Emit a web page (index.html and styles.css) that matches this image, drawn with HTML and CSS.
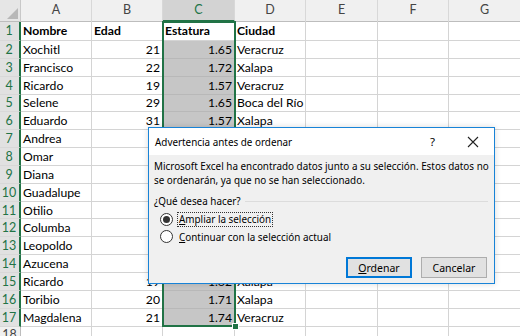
FILE: index.html
```html
<!DOCTYPE html>
<html lang="es">
    <head>
        <meta charset="UTF-8">
        <title>Advertencia antes de ordenar</title>
        <link rel="stylesheet" href="styles.css">
    </head>
    <body>
        <div class="sheet">
            <div class="row head-row">
                <div class="corner"><span class="tri"></span></div>
                <div class="col-head">A</div>
                <div class="col-head">B</div>
                <div class="col-head sel">C</div>
                <div class="col-head">D</div>
                <div class="col-head">E</div>
                <div class="col-head">F</div>
                <div class="col-head">G</div>
            </div>
            <div class="row first">
                <div class="row-head sel">1</div>
                <div class="cell b">Nombre</div>
                <div class="cell b">Edad</div>
                <div class="cell b">Estatura</div>
                <div class="cell b">Ciudad</div>
                <div class="cell"></div>
                <div class="cell"></div>
                <div class="cell"></div>
            </div>
            <div class="row">
                <div class="row-head sel">2</div>
                <div class="cell">Xochitl</div>
                <div class="cell num">21</div>
                <div class="cell num shade">1.65</div>
                <div class="cell">Veracruz</div>
                <div class="cell"></div>
                <div class="cell"></div>
                <div class="cell"></div>
            </div>
            <div class="row">
                <div class="row-head sel">3</div>
                <div class="cell">Francisco</div>
                <div class="cell num">22</div>
                <div class="cell num shade">1.72</div>
                <div class="cell">Xalapa</div>
                <div class="cell"></div>
                <div class="cell"></div>
                <div class="cell"></div>
            </div>
            <div class="row">
                <div class="row-head sel">4</div>
                <div class="cell">Ricardo</div>
                <div class="cell num">19</div>
                <div class="cell num shade">1.57</div>
                <div class="cell">Veracruz</div>
                <div class="cell"></div>
                <div class="cell"></div>
                <div class="cell"></div>
            </div>
            <div class="row">
                <div class="row-head sel">5</div>
                <div class="cell">Selene</div>
                <div class="cell num">29</div>
                <div class="cell num shade">1.65</div>
                <div class="cell">Boca del Río</div>
                <div class="cell"></div>
                <div class="cell"></div>
                <div class="cell"></div>
            </div>
            <div class="row">
                <div class="row-head sel">6</div>
                <div class="cell">Eduardo</div>
                <div class="cell num">31</div>
                <div class="cell num shade">1.57</div>
                <div class="cell">Xalapa</div>
                <div class="cell"></div>
                <div class="cell"></div>
                <div class="cell"></div>
            </div>
            <!-- rows 7-14: B, C and D lie under the dialog -->
            <div class="row">
                <div class="row-head sel">7</div>
                <div class="cell">Andrea</div>
                <div class="cell"></div>
                <div class="cell shade"></div>
                <div class="cell"></div>
                <div class="cell"></div>
                <div class="cell"></div>
                <div class="cell"></div>
            </div>
            <div class="row">
                <div class="row-head sel">8</div>
                <div class="cell">Omar</div>
                <div class="cell"></div>
                <div class="cell shade"></div>
                <div class="cell"></div>
                <div class="cell"></div>
                <div class="cell"></div>
                <div class="cell"></div>
            </div>
            <div class="row">
                <div class="row-head sel">9</div>
                <div class="cell">Diana</div>
                <div class="cell"></div>
                <div class="cell shade"></div>
                <div class="cell"></div>
                <div class="cell"></div>
                <div class="cell"></div>
                <div class="cell"></div>
            </div>
            <div class="row">
                <div class="row-head sel">10</div>
                <div class="cell">Guadalupe</div>
                <div class="cell"></div>
                <div class="cell shade"></div>
                <div class="cell"></div>
                <div class="cell"></div>
                <div class="cell"></div>
                <div class="cell"></div>
            </div>
            <div class="row">
                <div class="row-head sel">11</div>
                <div class="cell">Otilio</div>
                <div class="cell"></div>
                <div class="cell shade"></div>
                <div class="cell"></div>
                <div class="cell"></div>
                <div class="cell"></div>
                <div class="cell"></div>
            </div>
            <div class="row">
                <div class="row-head sel">12</div>
                <div class="cell">Columba</div>
                <div class="cell"></div>
                <div class="cell shade"></div>
                <div class="cell"></div>
                <div class="cell"></div>
                <div class="cell"></div>
                <div class="cell"></div>
            </div>
            <div class="row">
                <div class="row-head sel">13</div>
                <div class="cell">Leopoldo</div>
                <div class="cell"></div>
                <div class="cell shade"></div>
                <div class="cell"></div>
                <div class="cell"></div>
                <div class="cell"></div>
                <div class="cell"></div>
            </div>
            <div class="row">
                <div class="row-head sel">14</div>
                <div class="cell">Azucena</div>
                <div class="cell"></div>
                <div class="cell shade"></div>
                <div class="cell"></div>
                <div class="cell"></div>
                <div class="cell"></div>
                <div class="cell"></div>
            </div>
            <div class="row">
                <div class="row-head sel">15</div>
                <div class="cell">Ricardo</div>
                <div class="cell num">19</div>
                <div class="cell num shade">1.62</div>
                <div class="cell">Xalapa</div>
                <div class="cell"></div>
                <div class="cell"></div>
                <div class="cell"></div>
            </div>
            <div class="row">
                <div class="row-head sel">16</div>
                <div class="cell">Toribio</div>
                <div class="cell num">20</div>
                <div class="cell num shade">1.71</div>
                <div class="cell">Xalapa</div>
                <div class="cell"></div>
                <div class="cell"></div>
                <div class="cell"></div>
            </div>
            <div class="row">
                <div class="row-head sel">17</div>
                <div class="cell">Magdalena</div>
                <div class="cell num">21</div>
                <div class="cell num shade">1.74</div>
                <div class="cell">Veracruz</div>
                <div class="cell"></div>
                <div class="cell"></div>
                <div class="cell"></div>
            </div>
            <div class="row">
                <div class="row-head">18</div>
                <div class="cell"></div>
                <div class="cell"></div>
                <div class="cell"></div>
                <div class="cell"></div>
                <div class="cell"></div>
                <div class="cell"></div>
                <div class="cell"></div>
            </div>

            <!-- selection outline over C1:C17 -->
            <div class="selection"><span class="handle"></span></div>
        </div>

        <div class="dialog">
            <div class="dialog-title">
                <span class="title-text">Advertencia antes de ordenar</span>
                <span class="help">?</span>
                <svg class="close" width="12" height="12" viewBox="0 0 12 12">
                    <path d="M1 1L11 11M11 1L1 11" stroke="#222" stroke-width="1.1" fill="none"/>
                </svg>
            </div>
            <div class="dialog-body">
                <p class="message">Microsoft Excel ha encontrado datos junto a su selección. Estos datos no<br>se ordenarán, ya que no se han seleccionado.</p>
                <div class="group-label">¿Qué desea hacer?</div>
                <div class="option first-opt">
                    <span class="radio checked"></span>
                    <span class="focus"><u>A</u>mpliar la selección</span>
                </div>
                <div class="option">
                    <span class="radio"></span>
                    <span class="label"><u>C</u>ontinuar con la selección actual</span>
                </div>
                <div class="buttons">
                    <button class="btn default"><u>O</u>rdenar</button>
                    <button class="btn">Cancelar</button>
                </div>
            </div>
        </div>
    </body>
</html>
```

FILE: styles.css
```css
* {
    margin: 0;
    padding: 0;
    box-sizing: border-box;
}
body {
    background: #FFF;
    color: #000;
    width: 520px;
    height: 336px;
    overflow: hidden;
}

/* ---------- sheet ---------- */
.sheet {
    position: relative;
    font: 12.2px Lato, "Liberation Sans", sans-serif;
}
.row {
    display: grid;
    grid-template-columns: 21px 71px 71px 72px 71px 72px 71px 72px;
    height: 17.85px;
}
.head-row {
    height: 21px;
}
.first {
    height: 20px;
}
.corner {
    position: relative;
    background: #E6E6E6;
    border-right: 1px solid #C8C8C8;
    border-bottom: 1px solid #BDBDBD;
}
.tri {
    position: absolute;
    right: 2px;
    bottom: 2px;
    width: 0;
    height: 0;
    border-left: 11px solid transparent;
    border-bottom: 11px solid #B8B8B8;
}
.col-head {
    background: #F0F0F0;
    color: #444;
    font-size: 12.5px;
    text-align: center;
    line-height: 20px;
    border-right: 1px solid #D8D8D8;
    border-bottom: 1px solid #BDBDBD;
}
.col-head.sel {
    background: #D3D3D3;
    color: #217346;
    border-bottom: 2px solid #217346;
}
.row-head {
    background: #F0F0F0;
    color: #444;
    font-size: 12.5px;
    border-right: 1px solid #BDBDBD;
    border-bottom: 1px solid #D8D8D8;
    display: flex;
    align-items: center;
    justify-content: center;
    padding-right: 1px;
}
.row-head.sel {
    background: #E1E1E1;
    color: #217346;
    border-right: 2px solid #217346;
}
.cell {
    border-right: 1px solid #D4D4D4;
    border-bottom: 1px solid #D4D4D4;
    padding: 0 2px;
    white-space: nowrap;
    overflow: hidden;
    display: flex;
    align-items: center;
}
.cell.b {
    font-weight: bold;
}
.cell.num {
    justify-content: flex-end;
}
.cell.shade {
    background: #C6C6C6;
    border-right-color: #B8B8B8;
    border-bottom-color: #B8B8B8;
}
.selection {
    position: absolute;
    left: 162px;
    top: 21px;
    width: 74px;
    height: 306px;
    border: 2px solid #217346;
}
.handle {
    position: absolute;
    right: -5px;
    bottom: -5px;
    width: 7px;
    height: 7px;
    background: #217346;
    border: 1px solid #FFF;
}

/* ---------- dialog ---------- */
.dialog {
    position: absolute;
    left: 148px;
    top: 127px;
    width: 347px;
    height: 157px;
    background: #F0F0F0;
    border: 1px solid #1883D7;
    font: 9.9px "Noto Sans", "Open Sans", sans-serif;
    color: #000;
    box-shadow: 0 0 6px rgba(0, 0, 0, 0.15);
}
.dialog-title {
    display: flex;
    align-items: center;
    height: 27px;
    background: #FFF;
    padding: 0 15px 0 6px;
}
.title-text {
    flex: 1;
}
.help {
    font-size: 11.5px;
    margin-right: 32px;
}
.close {
    display: block;
}
.dialog-body {
    padding: 4px 6px 0 5px;
}
.message {
    line-height: 14px;
    white-space: nowrap;
}
.group-label {
    display: flex;
    align-items: center;
    margin-top: 6px;
    height: 16px;
}
.group-label::after {
    content: "";
    flex: 1;
    border-top: 1px solid #DCDCDC;
    margin-left: 4px;
}
.option {
    display: flex;
    align-items: center;
    height: 17px;
    padding-left: 6px;
}
.first-opt {
    margin-top: 2px;
}
.radio {
    width: 13px;
    height: 13px;
    border: 1px solid #333;
    border-radius: 50%;
    background: #FFF;
    margin-right: 4px;
    display: flex;
    align-items: center;
    justify-content: center;
}
.radio.checked::after {
    content: "";
    width: 7px;
    height: 7px;
    border-radius: 50%;
    background: #333;
}
.focus {
    border: 1px dotted #333;
    padding: 0 1px;
    line-height: 13px;
}
.label {
    padding: 0 2px;
}
.buttons {
    display: flex;
    justify-content: flex-end;
    gap: 9px;
    margin-top: 12px;
    padding-right: 1px;
}
.btn {
    width: 66px;
    height: 21px;
    background: #E1E1E1;
    border: 1px solid #ADADAD;
    font: inherit;
    font-size: 10.5px;
    color: #000;
}
.btn.default {
    border: 2px solid #0078D7;
}
```
